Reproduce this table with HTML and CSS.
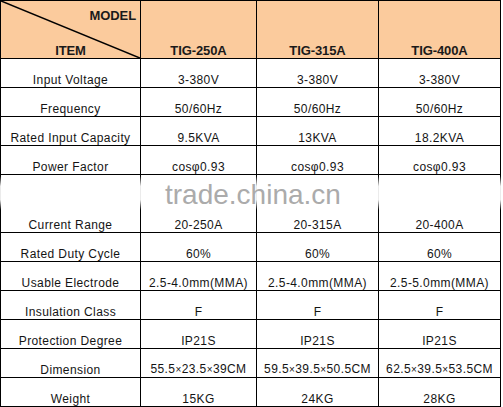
FILE: index.html
```html
<!DOCTYPE html>
<html>
<head>
<meta charset="utf-8">
<link rel="stylesheet" href="styles.css">
</head>
<body>
<div class="sheet">
<table class="spec">
  <colgroup>
    <col class="c1"><col class="c2"><col class="c3"><col class="c4">
  </colgroup>
  <tr class="head">
    <th class="corner-cell">
      <svg class="diag" viewBox="0 0 100 100" preserveAspectRatio="none"><line x1="0" y1="0" x2="100" y2="100" stroke="#000" stroke-width="1.6" vector-effect="non-scaling-stroke"/></svg>
      <div class="corner"><span class="model">MODEL</span><span class="item">ITEM</span></div>
    </th>
    <th>TIG-250A</th>
    <th>TIG-315A</th>
    <th>TIG-400A</th>
  </tr>
  <tr><td>Input Voltage</td><td>3-380V</td><td>3-380V</td><td>3-380V</td></tr>
  <tr><td>Frequency</td><td>50/60Hz</td><td>50/60Hz</td><td>50/60Hz</td></tr>
  <tr><td>Rated Input Capacity</td><td>9.5KVA</td><td>13KVA</td><td>18.2KVA</td></tr>
  <tr><td>Power Factor</td><td>cosφ0.93</td><td>cosφ0.93</td><td>cosφ0.93</td></tr>
  <tr class="tall"><td>Current Range</td><td>20-250A</td><td>20-315A</td><td>20-400A</td></tr>
  <tr><td>Rated Duty Cycle</td><td>60%</td><td>60%</td><td>60%</td></tr>
  <tr><td>Usable Electrode</td><td>2.5-4.0mm(MMA)</td><td>2.5-4.0mm(MMA)</td><td>2.5-5.0mm(MMA)</td></tr>
  <tr><td>Insulation Class</td><td>F</td><td>F</td><td>F</td></tr>
  <tr><td>Protection Degree</td><td>IP21S</td><td>IP21S</td><td>IP21S</td></tr>
  <tr><td>Dimension</td><td>55.5<span class="x">×</span>23.5<span class="x">×</span>39CM</td><td>59.5<span class="x">×</span>39.5<span class="x">×</span>50.5CM</td><td>62.5<span class="x">×</span>39.5<span class="x">×</span>53.5CM</td></tr>
  <tr><td>Weight</td><td>15KG</td><td>24KG</td><td>28KG</td></tr>
</table>
<div class="fade"></div>
<div class="watermark">trade.china.cn</div>
</div>
</body>
</html>
```
FILE: styles.css
```css
html, body {
  margin: 0;
  padding: 0;
  background: #fff;
}
.sheet {
  position: relative;
  width: 503px;
  height: 407px;
  overflow: hidden;
}
.spec {
  border-collapse: collapse;
  table-layout: fixed;
  width: 501px;
  font-family: "Liberation Sans", Arial, sans-serif;
  color: #141414;
}
.c1 { width: 140px; }
.c2 { width: 116px; }
.c3 { width: 122px; }
.c4 { width: 122px; }
.spec td, .spec th {
  border: 1px solid #000;
  padding: 0 1px;
  height: 28px;
  vertical-align: bottom;
  text-align: center;
  white-space: nowrap;
  font-size: 12px;
  line-height: 14px;
  letter-spacing: 0.4px;
}
.spec .head th {
  height: 57px;
  background: #fbcb9d;
  font-weight: bold;
  font-size: 13px;
  letter-spacing: -0.1px;
  line-height: 15px;
  color: #1a1a1a;
}
.spec .tall td {
  height: 57px;
}
.corner-cell {
  position: relative;
}
.diag {
  position: absolute;
  left: 0;
  top: 0;
  width: 100%;
  height: 100%;
}
.corner {
  display: flex;
  flex-direction: column;
  justify-content: space-between;
  height: 57px;
}
.model {
  align-self: flex-end;
  padding-top: 7px;
  padding-right: 3px;
}
.item {
  align-self: center;
}
.x {
  font-size: 10px;
}
.fade {
  position: absolute;
  left: 0;
  top: 176px;
  width: 503px;
  height: 34px;
  background: linear-gradient(to bottom, rgba(255,255,255,0) 0%, rgba(255,255,255,0.92) 30%, rgba(255,255,255,0.92) 70%, rgba(255,255,255,0) 100%);
}
.watermark {
  position: absolute;
  left: 165px;
  top: 181px;
  font-family: "Liberation Sans", Arial, sans-serif;
  font-size: 28px;
  line-height: 28px;
  color: #ababab;
}
```
